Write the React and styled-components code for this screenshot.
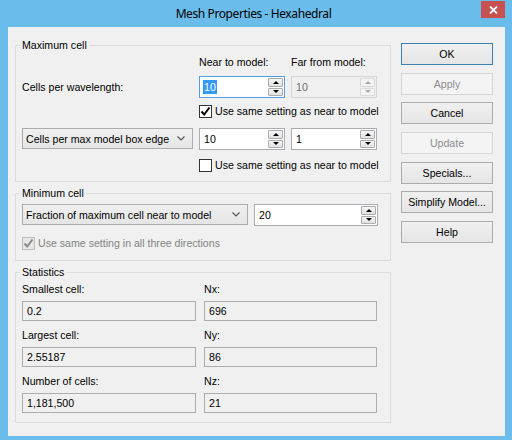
import React from 'react';
import styled, { createGlobalStyle } from 'styled-components';

const GlobalStyle = createGlobalStyle`
  html, body {
    margin: 0;
    padding: 0;
    background: #6abcea;
  }
  body {
    font-family: "Liberation Sans", Arial, sans-serif;
    font-size: 10.6px;
    color: #000;
  }
  * {
    box-sizing: border-box;
  }
`;

const Window = styled.div`
  width: 512px;
  height: 440px;
  background: #6abcea;
  display: flex;
  flex-direction: column;
  padding: 0 7px 4px 8px;
`;

const TitleBar = styled.div`
  height: 27px;
  display: grid;
  grid-template-columns: 1fr auto 1fr;
  align-items: start;
`;

const Title = styled.div`
  grid-column: 2;
  margin: 6px 6px 0 0;
  font-family: "Noto Sans", "Open Sans", sans-serif;
  font-size: 12px;
  letter-spacing: -0.4px;
  line-height: 16px;
  color: #000;
`;

const CloseButton = styled.div`
  grid-column: 3;
  justify-self: end;
  width: 24px;
  height: 17px;
  margin-top: 1px;
  background: #c75050;
  display: flex;
  align-items: center;
  justify-content: center;
`;

const Client = styled.div`
  flex: 1;
  background: #f0f0f0;
  display: flex;
  gap: 10px;
  padding: 11px 12px 0 7px;
`;

const LeftColumn = styled.div`
  width: 376px;
  display: flex;
  flex-direction: column;
  gap: 4px;
`;

const Group = styled.fieldset`
  margin: 0;
  min-width: 0;
  padding: ${(p) => p.$top}px 6px ${(p) => p.$bottom}px;
  border: 1px solid #dcdcdc;
`;

const Legend = styled.legend`
  padding: 0 2px;
  margin-left: -2px;
  line-height: 14px;
`;

const MaxGrid = styled.div`
  display: grid;
  grid-template-columns: 171px 86px 86px;
  grid-template-rows: 21px 28px 24px 30px 14px;
  column-gap: 6px;
  align-items: start;
`;

const Label = styled.div`
  line-height: ${(p) => p.$lh || 14}px;
  white-space: nowrap;
  grid-column: ${(p) => p.$col || 'auto'};
`;

const Spin = styled.div`
  display: flex;
  height: 22px;
  width: ${(p) => (p.$w ? `${p.$w}px` : 'auto')};
  border: 1px solid ${(p) => (p.$focused ? '#569de5' : p.$disabled ? '#d5d5d5' : '#abadb3')};
  background: ${(p) => (p.$disabled ? '#f0f0f0' : '#fff')};
  padding: 1px;
`;

const SpinValue = styled.div`
  flex: 1;
  padding: 2px 0 0 3px;
  line-height: 14px;
  color: ${(p) => (p.$disabled ? '#6d6d6d' : '#000')};
`;

const Selected = styled.span`
  display: inline-block;
  background: #3399ff;
  color: #fff;
  padding: 0 1px;
  margin-left: -1px;
`;

const SpinButtons = styled.div`
  width: 15px;
  display: flex;
  flex-direction: column;
  gap: 1px;
`;

const SpinButton = styled.div`
  flex: 1;
  border: 1px solid ${(p) => (p.$disabled ? '#d9d9d9' : '#acacac')};
  border-radius: 1px;
  background: ${(p) => (p.$disabled ? '#f4f4f4' : 'linear-gradient(#f6f6f6, #e1e1e1)')};
  display: flex;
  align-items: center;
  justify-content: center;
`;

const Arrow = styled.span`
  width: 0;
  height: 0;
  border-left: 3px solid transparent;
  border-right: 3px solid transparent;
  ${(p) => (p.$down ? 'border-top' : 'border-bottom')}: 3px solid ${(p) => (p.$disabled ? '#a8a8a8' : '#000')};
`;

const Select = styled.div`
  display: flex;
  align-items: center;
  justify-content: space-between;
  width: ${(p) => (p.$w ? `${p.$w}px` : 'auto')};
  height: 21px;
  padding: 0 7px 0 3px;
  border: 1px solid #acacac;
  background: linear-gradient(#f0f0f0, #e5e5e5);
  white-space: nowrap;
`;

const CheckRow = styled.div`
  display: flex;
  align-items: center;
  gap: 3px;
  line-height: 14px;
  white-space: nowrap;
  grid-column: ${(p) => p.$col || 'auto'};
  color: ${(p) => (p.$disabled ? '#838383' : '#000')};
`;

const CheckBox = styled.span`
  width: 13px;
  height: 13px;
  flex: none;
  border: 1px solid ${(p) => (p.$disabled ? '#bcbcbc' : '#333')};
  background: ${(p) => (p.$disabled ? '#e6e6e6' : '#fff')};
  display: flex;
  align-items: center;
  justify-content: center;
`;

const MinRow = styled.div`
  display: flex;
  gap: 6px;
  align-items: flex-start;
  margin-bottom: 10px;
`;

const StatsGrid = styled.div`
  display: grid;
  grid-template-columns: 174px 173px;
  column-gap: 8px;
  row-gap: 7px;
`;

const Field = styled.div`
  display: flex;
  flex-direction: column;
  gap: 5px;
`;

const ReadOnly = styled.div`
  height: 20px;
  border: 1px solid #adadad;
  background: #f0f0f0;
  padding-left: 4px;
  line-height: 18px;
`;

const ButtonColumn = styled.div`
  width: 92px;
  display: flex;
  flex-direction: column;
  gap: 7.7px;
  padding-top: 5px;
`;

const Button = styled.div`
  height: 22px;
  display: flex;
  align-items: center;
  justify-content: center;
  border: 1px solid ${(p) => (p.$default ? '#3c7fb1' : p.$disabled ? '#d5d5d5' : '#acacac')};
  background: ${(p) => (p.$disabled ? '#f4f4f4' : 'linear-gradient(#f0f0f0, #e5e5e5)')};
  color: ${(p) => (p.$disabled ? '#8d8d8d' : '#000')};
`;

const Tick = ({ color = '#000' }) => (
  <svg width="11" height="11" viewBox="0 0 11 11">
    <path d="M1.5 5.5 L4.2 8.5 L9.5 1.5" fill="none" stroke={color} strokeWidth="2" />
  </svg>
);

const Chevron = () => (
  <svg width="8" height="5" viewBox="0 0 8 5">
    <path d="M0.5 0.5 L4 4 L7.5 0.5" fill="none" stroke="#555" strokeWidth="1.2" />
  </svg>
);

const SpinBox = ({ value, w, focused, disabled }) => (
  <Spin $w={w} $focused={focused} $disabled={disabled}>
    <SpinValue $disabled={disabled}>{focused ? <Selected>{value}</Selected> : value}</SpinValue>
    <SpinButtons>
      <SpinButton $disabled={disabled}><Arrow $disabled={disabled} /></SpinButton>
      <SpinButton $disabled={disabled}><Arrow $down $disabled={disabled} /></SpinButton>
    </SpinButtons>
  </Spin>
);

const Checkbox = ({ checked, disabled, col, children }) => (
  <CheckRow $col={col} $disabled={disabled}>
    <CheckBox $disabled={disabled}>{checked && <Tick color={disabled ? '#8a8a8a' : '#000'} />}</CheckBox>
    {children}
  </CheckRow>
);

const stats = [
  ['Smallest cell:', '0.2', 'Nx:', '696'],
  ['Largest cell:', '2.55187', 'Ny:', '86'],
  ['Number of cells:', '1,181,500', 'Nz:', '21'],
];

const buttons = [
  { label: 'OK', default: true },
  { label: 'Apply', disabled: true },
  { label: 'Cancel' },
  { label: 'Update', disabled: true },
  { label: 'Specials...' },
  { label: 'Simplify Model...' },
  { label: 'Help' },
];

export default function App() {
  return (
    <>
      <GlobalStyle />
      <Window>
        <TitleBar>
          <Title>Mesh Properties - Hexahedral</Title>
          <CloseButton>
            <svg width="9" height="8" viewBox="0 0 9 8">
              <path d="M1 0.5 L8 7.5 M8 0.5 L1 7.5" stroke="#fff" strokeWidth="1.8" />
            </svg>
          </CloseButton>
        </TitleBar>
        <Client>
          <LeftColumn>
            <Group $top={3} $bottom={9}>
              <Legend>Maximum cell</Legend>
              <MaxGrid>
                <Label $col={2}>Near to model:</Label>
                <Label>Far from model:</Label>
                <Label $lh={22}>Cells per wavelength:</Label>
                <SpinBox value="10" focused />
                <SpinBox value="10" disabled />
                <Checkbox col="2 / span 2" checked>Use same setting as near to model</Checkbox>
                <Select>
                  Cells per max model box edge
                  <Chevron />
                </Select>
                <SpinBox value="10" />
                <SpinBox value="1" />
                <Checkbox col="2 / span 2">Use same setting as near to model</Checkbox>
              </MaxGrid>
            </Group>
            <Group $top={4} $bottom={10}>
              <Legend>Minimum cell</Legend>
              <MinRow>
                <Select $w={226}>
                  Fraction of maximum cell near to model
                  <Chevron />
                </Select>
                <SpinBox value="20" w={124} />
              </MinRow>
              <Checkbox checked disabled>Use same setting in all three directions</Checkbox>
            </Group>
            <Group $top={3} $bottom={9}>
              <Legend>Statistics</Legend>
              <StatsGrid>
                {stats.map(([l1, v1, l2, v2]) => (
                  <React.Fragment key={l1}>
                    <Field>
                      <Label>{l1}</Label>
                      <ReadOnly>{v1}</ReadOnly>
                    </Field>
                    <Field>
                      <Label>{l2}</Label>
                      <ReadOnly>{v2}</ReadOnly>
                    </Field>
                  </React.Fragment>
                ))}
              </StatsGrid>
            </Group>
          </LeftColumn>
          <ButtonColumn>
            {buttons.map((b) => (
              <Button key={b.label} $default={b.default} $disabled={b.disabled}>
                {b.label}
              </Button>
            ))}
          </ButtonColumn>
        </Client>
      </Window>
    </>
  );
}
